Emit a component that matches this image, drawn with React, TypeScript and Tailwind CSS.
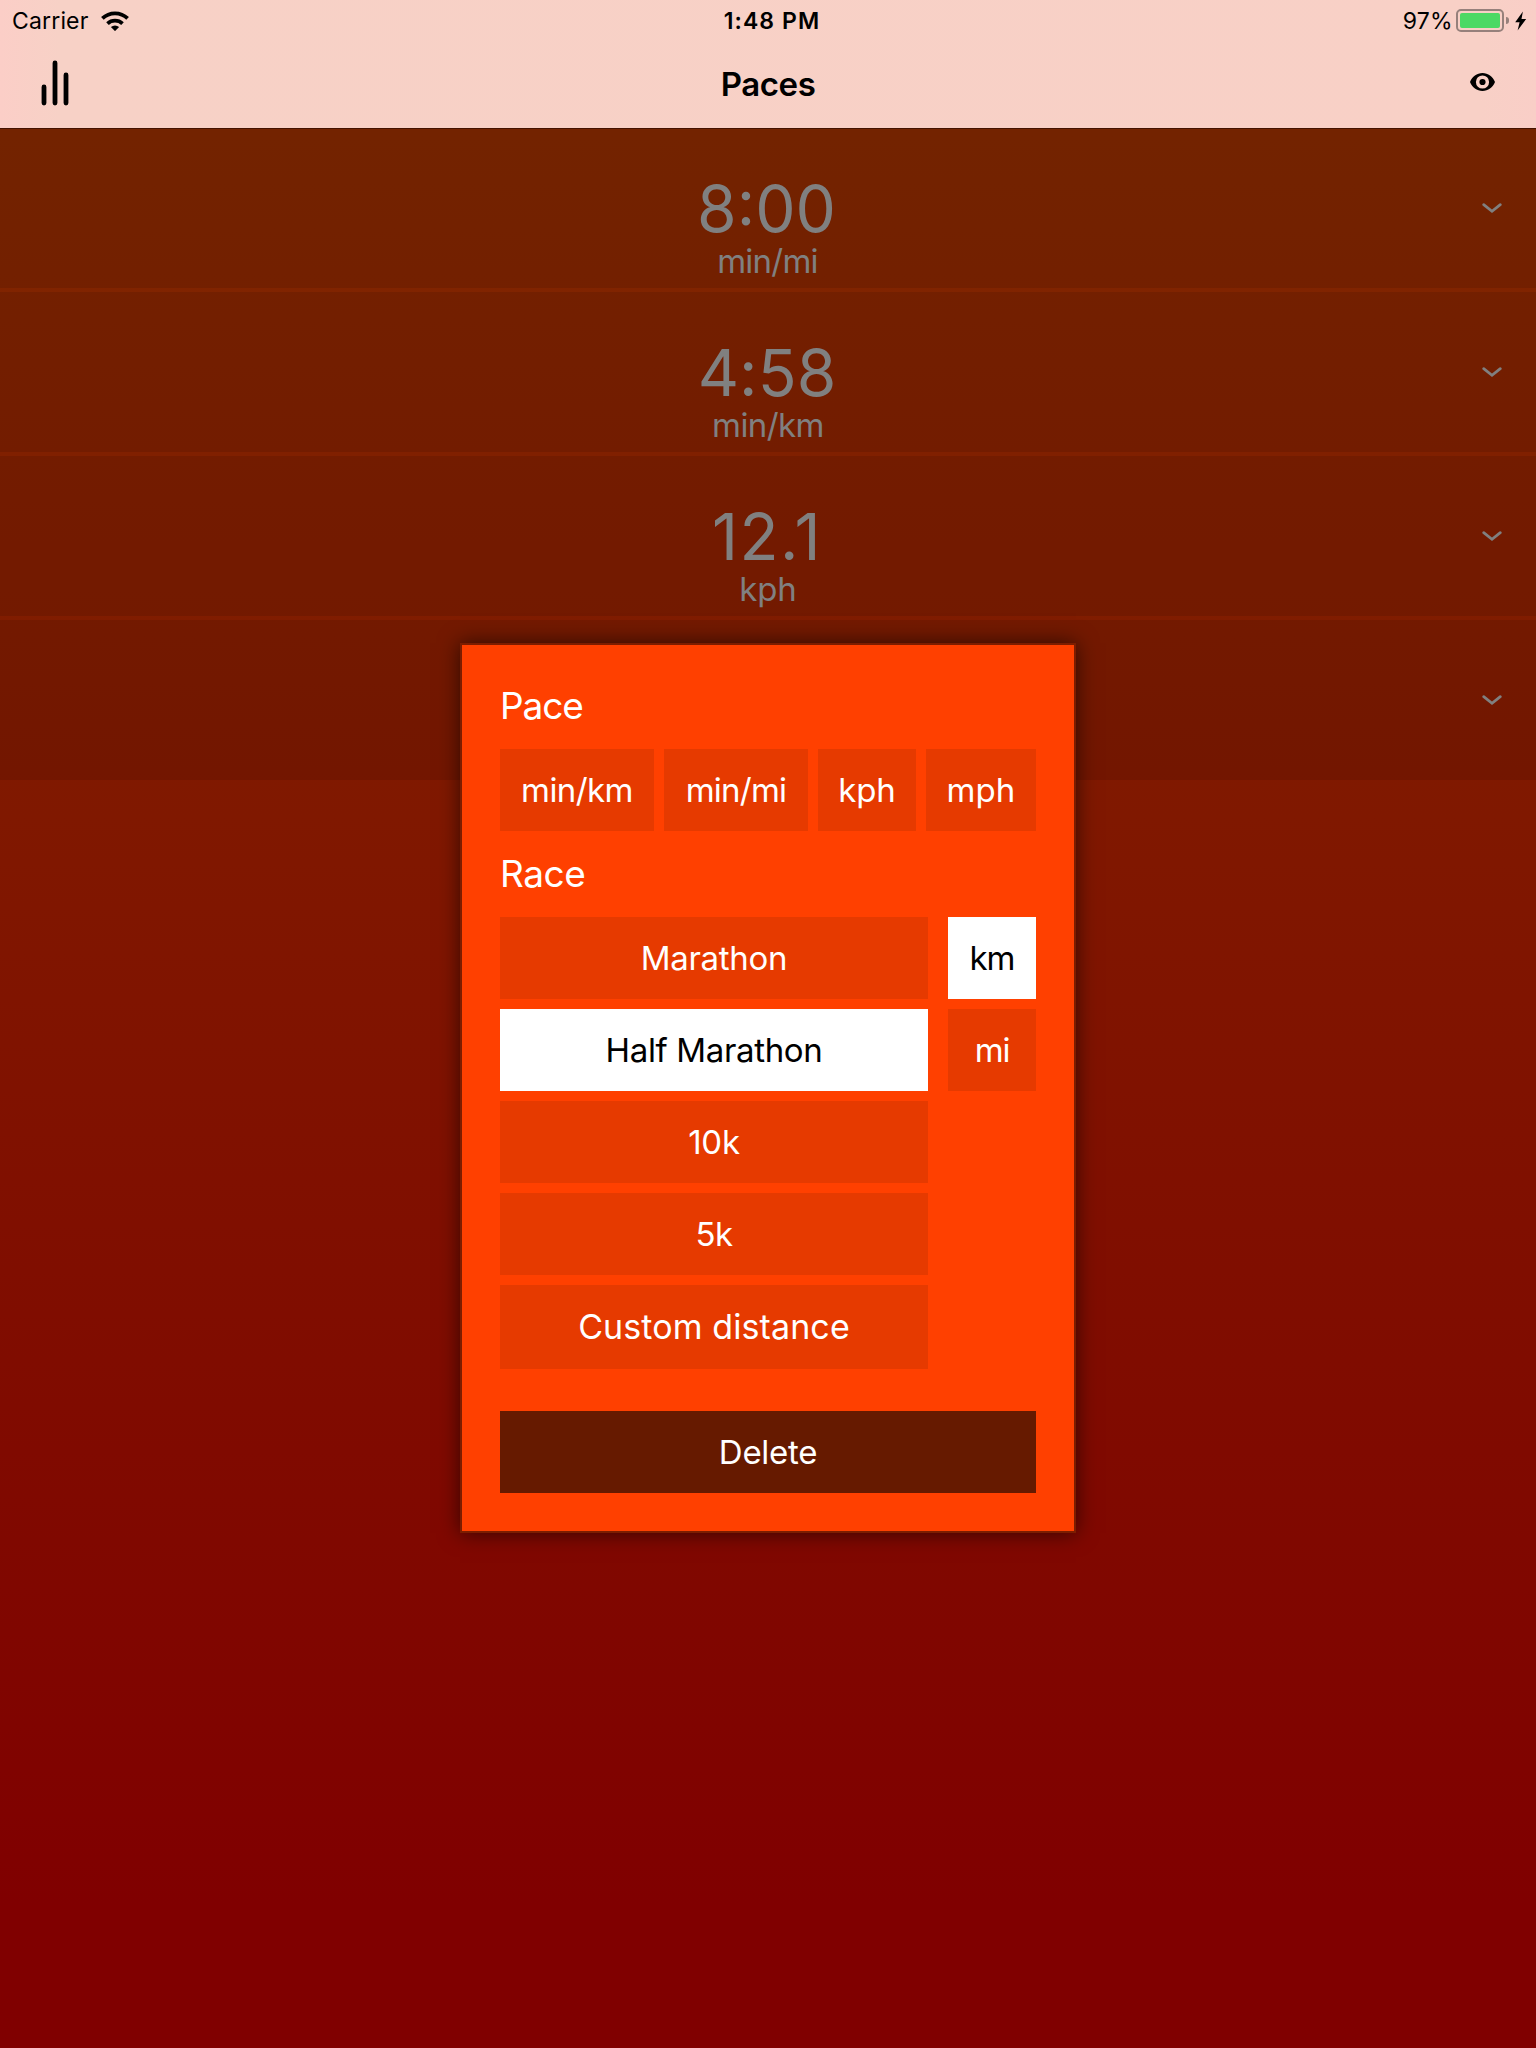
import React from "react";

type Row = { value?: string; unit?: string; valueClass?: string; unitClass?: string };

const rows: Row[] = [
  { value: "8:00", unit: "min/mi", valueClass: "pr-[3px]", unitClass: "pr-[1px] tracking-[-0.78px]" },
  { value: "4:58", unit: "min/km", valueClass: "pr-[2px] tracking-[0.1px]", unitClass: "tracking-[-0.58px]" },
  { value: "12.1", unit: "kph", valueClass: "pr-[2px] tracking-[1.44px]", unitClass: "tracking-[-0.16px]" },
  {},
];

const paces = [
  { label: "min/km", className: "w-[154px] tracking-[-0.58px]" },
  { label: "min/mi", className: "w-[144px] tracking-[-0.78px]" },
  { label: "kph", className: "w-[98px] tracking-[-0.1px]" },
  { label: "mph", className: "w-[110px] tracking-[0.05px]" },
];

const races = [
  { label: "Marathon", className: "h-[82px] text-[33px] tracking-[-0.3px]" },
  { label: "Half Marathon", className: "h-[82px] text-[33px] tracking-[-0.35px]", active: true },
  { label: "10k", className: "h-[82px] text-[33px] tracking-[-0.27px]" },
  { label: "5k", className: "h-[82px] text-[33px] tracking-[-0.7px]" },
  { label: "Custom distance", className: "h-[84px] text-[34px] tracking-[0.1px]" },
];

function Option({ label, className = "", active = false }: { label: string; className?: string; active?: boolean }) {
  return (
    <button
      className={`flex items-center justify-center whitespace-nowrap leading-[40px] ${
        active ? "bg-white text-black" : "bg-[#e63a00] text-white"
      } ${className}`}
    >
      {label}
    </button>
  );
}

function WifiIcon() {
  return (
    <svg width="28" height="20" viewBox="0 0 28 20" fill="none" stroke="#000" strokeWidth="3.8">
      <path d="M1.4 7.4A18.2 18.2 0 0 1 26.6 7.4" />
      <path d="M6.5 12.6A11 11 0 0 1 21.5 12.6" />
      <path d="M9.9 16.1L14 20.1L18.1 16.1A6.2 6.2 0 0 0 9.9 16.1Z" fill="#000" stroke="none" />
    </svg>
  );
}

function BarsIcon() {
  return (
    <svg width="28" height="46" viewBox="0 0 28 46" stroke="#000" strokeWidth="4.8" strokeLinecap="round">
      <path d="M3 26.9V43M14 3V43M25 15V43" />
    </svg>
  );
}

function EyeIcon() {
  return (
    <svg width="25" height="18" viewBox="0 0 25 18" fill="#000">
      <path
        fillRule="evenodd"
        d="M12.5 0C6.9 0 2.2 3.7 0 9C2.2 14.3 6.9 18 12.5 18S22.8 14.3 25 9C22.8 3.7 18.1 0 12.5 0ZM12.5 2.4A6.6 6.6 0 1 1 12.5 15.6A6.6 6.6 0 1 1 12.5 2.4Z"
      />
      <circle cx="12.5" cy="9" r="3.1" />
    </svg>
  );
}

function Chevron() {
  return (
    <svg width="20" height="10" viewBox="0 0 20 10" fill="none" stroke="#808080" strokeWidth="2.7" strokeLinecap="round">
      <path d="M1.7 1.6L10 8.2L18.3 1.6" />
    </svg>
  );
}

function StatusBar() {
  return (
    <div className="grid h-[41px] grid-cols-[1fr_auto_1fr] items-center text-[23px] leading-[28px]">
      <div className="flex items-center pl-3">
        <span className="w-[89px] tracking-[0.16px]">Carrier</span>
        <WifiIcon />
      </div>
      <span className="pl-[8px] font-semibold tracking-[1.09px]">1:48 PM</span>
      <div className="flex items-center justify-end pr-[9px]">
        <span className="pr-[3px] tracking-[0.29px]">97%</span>
        <div className="h-[23px] w-[48px] rounded-[5px] border-2 border-[#96807b] p-[2px]">
          <div className="h-full rounded-[2px] bg-[#4cd964]" />
        </div>
        <div className="ml-[2px] h-[7px] w-[3px] rounded-r-full bg-[#96807b]" />
        <svg className="ml-[6px]" width="12" height="20" viewBox="0 0 12 20">
          <path d="M7.9 0.6L0.2 11.2H4.6L2.6 19.4L11.2 7.9H6.5Z" fill="#000" />
        </svg>
      </div>
    </div>
  );
}

export default function App() {
  return (
    <div
      className="relative flex h-[2048px] w-full flex-col overflow-hidden bg-[linear-gradient(to_bottom,#802a00_0%,#800000_93%)] text-black"
      style={{ fontFamily: 'Inter, "Liberation Sans", sans-serif' }}
    >
      <header className="h-[128px] shrink-0 bg-[linear-gradient(to_right,#fbcec7_0px,#f7d1c6_60px,#f8d0c6_1480px,#f9cec7_1536px)]">
        <StatusBar />
        <div className="grid h-[86px] grid-cols-[1fr_auto_1fr] items-center">
          <div className="pb-[2px] pl-[41px]">
            <BarsIcon />
          </div>
          <h1 className="text-[33px] font-semibold leading-[40px] tracking-[-0.42px]">Paces</h1>
          <div className="flex justify-end pb-[4px] pr-[41px]">
            <EyeIcon />
          </div>
        </div>
      </header>

      <main className="flex flex-col gap-1 shadow-[inset_0_1px_0_#4c1500]">
        {rows.map((row, i) => (
          <div key={i} className="grid h-[160px] grid-cols-[1fr_auto_1fr] bg-black/10 text-[#808080]">
            <div />
            <div className="flex flex-col items-center pt-[40px]">
              <span className={`text-[64px] leading-[81px] ${row.valueClass ?? ""}`}>{row.value}</span>
              <span className={`text-[33px] leading-[24px] ${row.unitClass ?? ""}`}>{row.unit}</span>
            </div>
            <div className="flex items-center justify-end pr-[34px]">
              <Chevron />
            </div>
          </div>
        ))}
      </main>

      <div
        role="dialog"
        className="absolute left-[460px] top-[643px] h-[890px] w-[616px] border-2 border-[#7c1d00] bg-[#ff4000] p-[38px] pr-[36px] text-white shadow-[0_0_20px_rgba(0,0,0,0.6)]"
      >
        <h2 className="mb-[21px] text-[37px] leading-[45px] tracking-[-1.08px]">Pace</h2>
        <div className="flex gap-[10px]">
          {paces.map((p) => (
            <Option key={p.label} label={p.label} className={`h-[82px] text-[33px] ${p.className}`} />
          ))}
        </div>
        <h2 className="mb-[21px] mt-5 text-[37px] leading-[45px] tracking-[-0.41px]">Race</h2>
        <div className="flex gap-5">
          <div className="flex w-[428px] flex-col gap-[10px]">
            {races.map((r) => (
              <Option key={r.label} {...r} />
            ))}
          </div>
          <div className="flex w-[88px] flex-col gap-[10px]">
            <Option label="km" className="h-[82px] text-[33px] tracking-[-1.1px]" active />
            <Option label="mi" className="h-[82px] text-[33px] tracking-[-1.2px]" />
          </div>
        </div>
        <button className="mt-[42px] flex h-[82px] w-[536px] items-center justify-center bg-[#661a00] text-[33px] leading-[40px] tracking-[-0.29px]">
          Delete
        </button>
      </div>
    </div>
  );
}
